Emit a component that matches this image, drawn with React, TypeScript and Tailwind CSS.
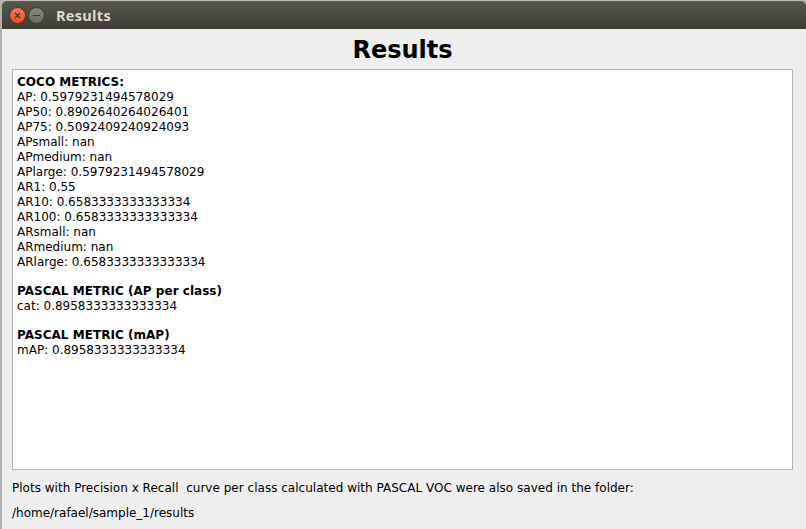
const coco = ["AP: 0.5979231494578029","AP50: 0.8902640264026401","AP75: 0.5092409240924093","APsmall: nan","APmedium: nan","APlarge: 0.5979231494578029","AR1: 0.55","AR10: 0.6583333333333334","AR100: 0.6583333333333334","ARsmall: nan","ARmedium: nan","ARlarge: 0.6583333333333334"];

function Section({ title, lines }: { title: string; lines: string[] }) {
  return (
    <section>
      <h2 className="font-bold tracking-[0.03px]">{title}</h2>
      {lines.map((line) => <p key={line}>{line}</p>)}
    </section>
  );
}

export default function App() {
  return (
    <div className="flex h-[529px] w-[806px] flex-col overflow-hidden border-l-2 border-[#b1b1b1] bg-[#b9bbb7] pt-px font-['DejaVu_Sans',sans-serif] text-black">
      <header className="flex h-7 shrink-0 items-center rounded-t-[5px] border-t border-[#5f6052] bg-linear-to-b from-[#58564b] to-[#3e3d39] pl-[7px]">
        <svg width="38" height="18" viewBox="0 0 38 18">
          <defs>
            <linearGradient id="close" x2="0" y2="1"><stop stopColor="#f67d58" /><stop offset="1" stopColor="#e4531f" /></linearGradient>
            <linearGradient id="minimize" x2="0" y2="1"><stop stopColor="#8b897f" /><stop offset="1" stopColor="#6a6961" /></linearGradient>
          </defs>
          <circle cx="8.5" cy="8.5" r="8" fill="url(#close)" stroke="#393834" />
          <path d="M6 6l5 5m0-5l-5 5" stroke="#4c2b20" strokeWidth="1.1" />
          <circle cx="27.5" cy="8.5" r="8" fill="url(#minimize)" stroke="#393834" />
          <path d="M24 8.5h7" stroke="#3c3b37" />
        </svg>
        <span className="ml-[9px] font-['Open_Sans',sans-serif] text-[14.5px] leading-5 font-bold tracking-[0.3px] text-[#dfdbd2]">Results</span>
      </header>
      <main className="flex min-h-0 grow flex-col bg-[#eeeeee] pl-[10px] pr-[13px] text-[12px] leading-[15px]">
        <h1 className="h-10 text-center text-[24px] leading-[42px] font-bold">Results</h1>
        <div className="flex h-[401px] shrink-0 flex-col gap-[14px] border border-[#b5b5b5] bg-white px-1 pt-[5px]">
          <Section title="COCO METRICS:" lines={coco} />
          <Section title="PASCAL METRIC (AP per class)" lines={["cat: 0.8958333333333334"]} />
          <Section title="PASCAL METRIC (mAP)" lines={["mAP: 0.8958333333333334"]} />
        </div>
        <p className="mt-[11px] whitespace-pre tracking-[0.017px]">{"Plots with Precision x Recall  curve per class calculated with PASCAL VOC were also saved in the folder:"}</p>
        <p className="mt-[10px]">/home/rafael/sample_1/results</p>
      </main>
    </div>
  );
}
